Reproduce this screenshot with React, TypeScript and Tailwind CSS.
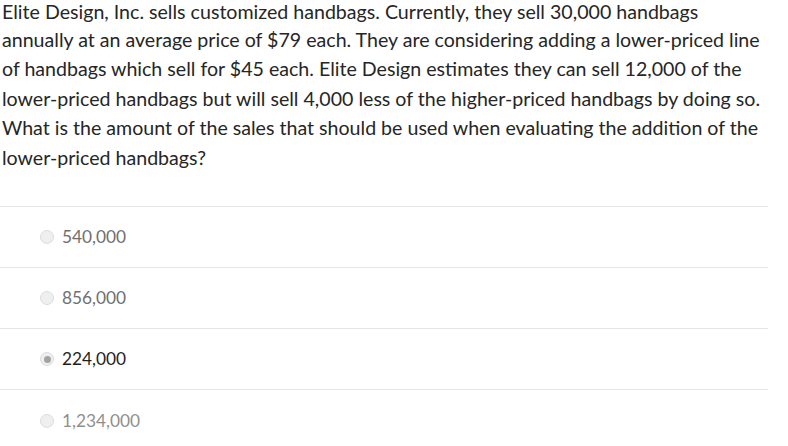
const options = [
  { label: "540,000", text: "text-[#6f6f6f]", selected: false },
  { label: "856,000", text: "text-[#6f6f6f]", selected: false },
  { label: "224,000", text: "text-[#1f1f1f]", selected: true },
  { label: "1,234,000", text: "text-[#8f8f8f]", selected: false },
];

const lines = [
  "annually at an average price of $79 each. They are considering adding a lower-priced line",
  "of handbags which sell for $45 each. Elite Design estimates they can sell 12,000 of the",
  "lower-priced handbags but will sell 4,000 less of the higher-priced handbags by doing so.",
  "What is the amount of the sales that should be used when evaluating the addition of the",
  "lower-priced handbags?",
];

function Radio({ selected }: { selected: boolean }) {
  return (
    <span className="w-[14px] h-[14px] rounded-full border border-[#dcdcdc] bg-[#efefef] flex items-center justify-center shrink-0">
      {selected && <span className="w-[7px] h-[7px] rounded-full bg-[#a3a3a3]" />}
    </span>
  );
}

export default function App() {
  return (
    <div className="w-[788px] h-[446px] overflow-hidden bg-white font-['Lato',sans-serif]">
      <div className="w-[768px]">
        {/* first line gets a tight line box so its glyphs sit near the top edge */}
        <p className="pl-[2px] text-[19.6px] leading-[29.6px] text-[#262626] pb-[33px] whitespace-nowrap">
          <span className="block leading-[23.6px] mb-[1px]">
            Elite Design, Inc. sells customized handbags. Currently, they sell 30,000 handbags
          </span>
          {lines.map((l) => (
            <span key={l} className="block">
              {l}
            </span>
          ))}
        </p>
        <ul>
          {options.map((o) => (
            <li
              key={o.label}
              className="h-[61.3px] border-t border-[#e6e6e6] flex items-center gap-[8px] pl-[40px]"
            >
              <Radio selected={o.selected} />
              <span className={`text-[17.3px] ${o.text}`}>{o.label}</span>
            </li>
          ))}
        </ul>
      </div>
    </div>
  );
}
